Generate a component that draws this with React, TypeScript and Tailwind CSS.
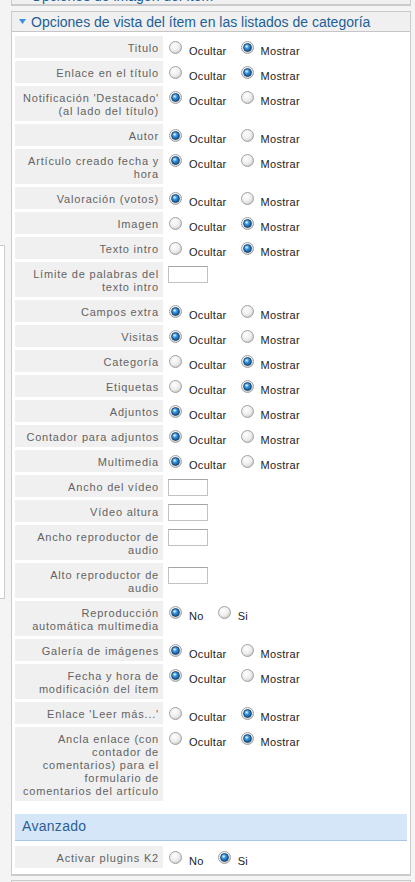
import React from "react";

type Row =
  | { label: string[]; kind: "radio"; options: string[]; checked: number }
  | { label: string[]; kind: "input" };

const OS = ["Ocultar", "Mostrar"];
const NS = ["No", "Si"];

const ROWS: Row[] = [
  { label: ["Titulo"], kind: "radio", options: OS, checked: 1 },
  { label: ["Enlace en el título"], kind: "radio", options: OS, checked: 1 },
  { label: ["Notificación 'Destacado'", "(al lado del título)"], kind: "radio", options: OS, checked: 0 },
  { label: ["Autor"], kind: "radio", options: OS, checked: 0 },
  { label: ["Artículo creado fecha y", "hora"], kind: "radio", options: OS, checked: 0 },
  { label: ["Valoración (votos)"], kind: "radio", options: OS, checked: 0 },
  { label: ["Imagen"], kind: "radio", options: OS, checked: 1 },
  { label: ["Texto intro"], kind: "radio", options: OS, checked: 1 },
  { label: ["Límite de palabras del", "texto intro"], kind: "input" },
  { label: ["Campos extra"], kind: "radio", options: OS, checked: 0 },
  { label: ["Visitas"], kind: "radio", options: OS, checked: 0 },
  { label: ["Categoría"], kind: "radio", options: OS, checked: 1 },
  { label: ["Etiquetas"], kind: "radio", options: OS, checked: 1 },
  { label: ["Adjuntos"], kind: "radio", options: OS, checked: 0 },
  { label: ["Contador para adjuntos"], kind: "radio", options: OS, checked: 0 },
  { label: ["Multimedia"], kind: "radio", options: OS, checked: 0 },
  { label: ["Ancho del vídeo"], kind: "input" },
  { label: ["Vídeo altura"], kind: "input" },
  { label: ["Ancho reproductor de", "audio"], kind: "input" },
  { label: ["Alto reproductor de", "audio"], kind: "input" },
  { label: ["Reproducción", "automática multimedia"], kind: "radio", options: NS, checked: 0 },
  { label: ["Galería de imágenes"], kind: "radio", options: OS, checked: 0 },
  { label: ["Fecha y hora de", "modificación del ítem"], kind: "radio", options: OS, checked: 0 },
  { label: ["Enlace 'Leer más...'"], kind: "radio", options: OS, checked: 1 },
  {
    label: ["Ancla enlace (con", "contador de", "comentarios) para el", "formulario de", "comentarios del artículo"],
    kind: "radio",
    options: OS,
    checked: 1,
  },
];

function Radio({ checked }: { checked: boolean }) {
  return (
    <svg width="13" height="13" viewBox="0 0 13 13" className="shrink-0">
      <defs>
        <radialGradient id="rg-off" cx="0.4" cy="0.35" r="0.7">
          <stop offset="0" stopColor="#ffffff" />
          <stop offset="0.6" stopColor="#ececec" />
          <stop offset="1" stopColor="#c4c4c4" />
        </radialGradient>
        <radialGradient id="rg-on" cx="0.4" cy="0.35" r="0.7">
          <stop offset="0" stopColor="#9fd4ff" />
          <stop offset="0.45" stopColor="#2b8fdc" />
          <stop offset="1" stopColor="#0b4f8f" />
        </radialGradient>
      </defs>
      <circle cx="6.5" cy="6.5" r="6" fill="url(#rg-off)" stroke="#a3a3a3" strokeWidth="1" />
      {checked && (
        <>
          <circle cx="6.5" cy="6.5" r="3.9" fill="url(#rg-on)" stroke="#1d3e63" strokeWidth="0.9" />
          <circle cx="5.6" cy="5.5" r="1.1" fill="#d6eeff" opacity="0.9" />
        </>
      )}
    </svg>
  );
}

function Label({ lines }: { lines: string[] }) {
  return (
    <div className="w-[148px] shrink-0 bg-[#f0f0f0] pt-[6px] pb-[3px] pr-[4px] text-right text-[11px] leading-[13px] tracking-[0.8px] text-[#636363] whitespace-nowrap">
      {lines.map((l, i) => (
        <div key={i}>{l}</div>
      ))}
    </div>
  );
}

function Options({ options, checked }: { options: string[]; checked: number }) {
  return (
    <div className="flex items-start pl-[6px] pt-[5px]">
      {options.map((o, i) => (
        <label key={o} className="mr-[14px] flex items-start">
          <Radio checked={i === checked} />
          <span className="ml-[7px] mt-[4px] text-[11px] leading-[13px] tracking-[0.3px] text-[#222222]">{o}</span>
        </label>
      ))}
    </div>
  );
}

function TextBox() {
  return (
    <div className="pl-[5px] pt-[4px]">
      <div className="h-[17px] w-[40px] border border-[#c2c2c2] border-t-[#a5a5a5] bg-white" />
    </div>
  );
}

function FormRow({ row }: { row: Row }) {
  return (
    <div className="flex">
      <Label lines={row.label} />
      {row.kind === "radio" ? <Options options={row.options} checked={row.checked} /> : <TextBox />}
    </div>
  );
}

function Arrow() {
  return (
    <svg width="7" height="5" viewBox="0 0 7 5" className="mr-[5px] shrink-0">
      <polygon points="0,0 7,0 3.5,5" fill="#3a8ee6" />
    </svg>
  );
}

export default function App() {
  return (
    <div
      className="flex h-[882px] overflow-hidden bg-[#f4f4f4]"
      style={{ fontFamily: '"Liberation Sans", Arial, sans-serif' }}
    >
      <div className="w-[5px] shrink-0">
        <div className="mt-[245px] h-[354px] border-y border-r border-[#cccccc] bg-white" />
      </div>

      <div className="ml-[6px] flex w-[400px] shrink-0 flex-col">
        <div className="-mt-[18px] h-[24px] border-x border-b-2 border-[#cbcbcb] bg-[#f0f0f0]">
          <div className="flex h-[22px] items-end pb-[1px] pl-[7px] text-[14px] leading-[14px] text-[#1d5f96]">
            <span className="mb-[4px]">
              <Arrow />
            </span>
            Opciones de imagen del ítem
          </div>
        </div>

        <div className="mt-[5px] border-x border-t border-b-2 border-[#cbcbcb] bg-white">
          <div className="flex h-[20px] items-center border-b border-[#c6c6c6] bg-[#f0f0f0] pl-[7px] text-[14px] leading-[20px] text-[#1d5f96]">
            <Arrow />
            <span>Opciones de vista del ítem en las listados de categoría</span>
          </div>

          <div className="px-[3px] pt-[4px] pb-[6px]">
            <div className="flex flex-col gap-[3px]">
              {ROWS.map((r, i) => (
                <FormRow key={i} row={r} />
              ))}
            </div>

            <div className="mt-[13px] h-[27px] border-b border-[#a9c6e4] bg-[#d5e6f8] pl-[7px] text-[14px] leading-[25px] tracking-[0.3px] text-[#2d5f95]">
              Avanzado
            </div>

            <div className="mt-[5px]">
              <FormRow row={{ label: ["Activar plugins K2"], kind: "radio", options: NS, checked: 1 }} />
            </div>
          </div>
        </div>

        <div className="mt-[4px] h-[10px] border-x border-t border-[#cbcbcb] bg-[#f0f0f0]" />
      </div>
    </div>
  );
}
